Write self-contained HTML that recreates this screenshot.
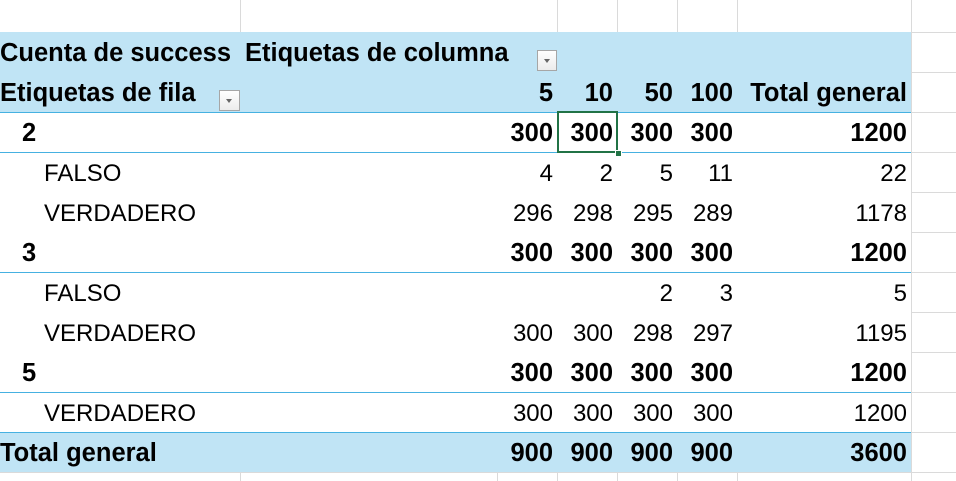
<!DOCTYPE html>
<html><head><meta charset="utf-8"><style>
body{margin:0;width:956px;height:481px;background:#fff;position:relative;overflow:hidden;font-family:"Liberation Sans",sans-serif;font-size:24px;color:#000}
.a{position:absolute}
.vl{position:absolute;width:1px;background:#dadada}
.hl{position:absolute;height:1px;background:#dadada}
.bl{position:absolute;left:0;width:911px;height:1px;background:#46b1e1}
.t{position:absolute;height:40px;line-height:43px;white-space:nowrap}
.r{text-align:right}
.b{font-weight:bold;font-size:25.5px}
.dd{position:absolute;width:18px;height:18px;border:1px solid #a6a6a6;background:linear-gradient(#fff,#ececec);box-sizing:border-box}
.dd:after{content:"";position:absolute;left:6px;top:8px;border-left:3.5px solid transparent;border-right:3.5px solid transparent;border-top:4px solid #666}
</style></head><body>
<div class="vl" style="left:240px;top:0;height:32px"></div>
<div class="vl" style="left:557px;top:0;height:32px"></div>
<div class="vl" style="left:617px;top:0;height:32px"></div>
<div class="vl" style="left:677px;top:0;height:32px"></div>
<div class="vl" style="left:737px;top:0;height:32px"></div>
<div class="vl" style="left:911px;top:0;height:481px"></div>
<div class="vl" style="left:557px;top:473px;height:8px"></div>
<div class="vl" style="left:617px;top:473px;height:8px"></div>
<div class="vl" style="left:677px;top:473px;height:8px"></div>
<div class="vl" style="left:737px;top:473px;height:8px"></div>
<div class="vl" style="left:497px;top:473px;height:8px"></div>
<div class="vl" style="left:240px;top:473px;height:8px"></div>
<div class="hl" style="left:911px;top:32px;width:45px"></div>
<div class="hl" style="left:911px;top:72px;width:45px"></div>
<div class="hl" style="left:911px;top:112px;width:45px"></div>
<div class="hl" style="left:911px;top:152px;width:45px"></div>
<div class="hl" style="left:911px;top:192px;width:45px"></div>
<div class="hl" style="left:911px;top:232px;width:45px"></div>
<div class="hl" style="left:911px;top:272px;width:45px"></div>
<div class="hl" style="left:911px;top:312px;width:45px"></div>
<div class="hl" style="left:911px;top:352px;width:45px"></div>
<div class="hl" style="left:911px;top:392px;width:45px"></div>
<div class="hl" style="left:911px;top:432px;width:45px"></div>
<div class="hl" style="left:0;top:472px;width:956px"></div>
<div class="a" style="left:0;top:32px;width:911px;height:80px;background:#c0e4f5"></div>
<div class="a" style="left:0;top:432px;width:911px;height:40px;background:#c0e4f5"></div>
<div class="bl" style="top:112px"></div>
<div class="bl" style="top:152px"></div>
<div class="bl" style="top:272px"></div>
<div class="bl" style="top:392px"></div>
<div class="bl" style="top:432px"></div>
<div class="t b" style="left:0;top:32px">Cuenta de success</div>
<div class="t b" style="left:245px;top:32px">Etiquetas de columna</div>
<div class="dd" style="left:537px;top:50px;width:20px;height:21px"></div>
<div class="t b" style="left:0;top:72px">Etiquetas de fila</div>
<div class="dd" style="left:219px;top:90px;width:21px;height:21px"></div>
<div class="t b r" style="left:497px;top:72px;width:56px">5</div>
<div class="t b r" style="left:557px;top:72px;width:56px">10</div>
<div class="t b r" style="left:617px;top:72px;width:56px">50</div>
<div class="t b r" style="left:677px;top:72px;width:56px">100</div>
<div class="t b r" style="left:737px;top:72px;width:170px">Total general</div>
<div class="t b" style="left:22px;top:112px">2</div>
<div class="t b r" style="left:497px;top:112px;width:56px">300</div>
<div class="t b r" style="left:557px;top:112px;width:56px">300</div>
<div class="t b r" style="left:617px;top:112px;width:56px">300</div>
<div class="t b r" style="left:677px;top:112px;width:56px">300</div>
<div class="t b r" style="left:737px;top:112px;width:170px">1200</div>
<div class="t" style="left:44px;top:152px">FALSO</div>
<div class="t r" style="left:497px;top:152px;width:56px">4</div>
<div class="t r" style="left:557px;top:152px;width:56px">2</div>
<div class="t r" style="left:617px;top:152px;width:56px">5</div>
<div class="t r" style="left:677px;top:152px;width:56px">11</div>
<div class="t r" style="left:737px;top:152px;width:170px">22</div>
<div class="t" style="left:44px;top:192px">VERDADERO</div>
<div class="t r" style="left:497px;top:192px;width:56px">296</div>
<div class="t r" style="left:557px;top:192px;width:56px">298</div>
<div class="t r" style="left:617px;top:192px;width:56px">295</div>
<div class="t r" style="left:677px;top:192px;width:56px">289</div>
<div class="t r" style="left:737px;top:192px;width:170px">1178</div>
<div class="t b" style="left:22px;top:232px">3</div>
<div class="t b r" style="left:497px;top:232px;width:56px">300</div>
<div class="t b r" style="left:557px;top:232px;width:56px">300</div>
<div class="t b r" style="left:617px;top:232px;width:56px">300</div>
<div class="t b r" style="left:677px;top:232px;width:56px">300</div>
<div class="t b r" style="left:737px;top:232px;width:170px">1200</div>
<div class="t" style="left:44px;top:272px">FALSO</div>
<div class="t r" style="left:617px;top:272px;width:56px">2</div>
<div class="t r" style="left:677px;top:272px;width:56px">3</div>
<div class="t r" style="left:737px;top:272px;width:170px">5</div>
<div class="t" style="left:44px;top:312px">VERDADERO</div>
<div class="t r" style="left:497px;top:312px;width:56px">300</div>
<div class="t r" style="left:557px;top:312px;width:56px">300</div>
<div class="t r" style="left:617px;top:312px;width:56px">298</div>
<div class="t r" style="left:677px;top:312px;width:56px">297</div>
<div class="t r" style="left:737px;top:312px;width:170px">1195</div>
<div class="t b" style="left:22px;top:352px">5</div>
<div class="t b r" style="left:497px;top:352px;width:56px">300</div>
<div class="t b r" style="left:557px;top:352px;width:56px">300</div>
<div class="t b r" style="left:617px;top:352px;width:56px">300</div>
<div class="t b r" style="left:677px;top:352px;width:56px">300</div>
<div class="t b r" style="left:737px;top:352px;width:170px">1200</div>
<div class="t" style="left:44px;top:392px">VERDADERO</div>
<div class="t r" style="left:497px;top:392px;width:56px">300</div>
<div class="t r" style="left:557px;top:392px;width:56px">300</div>
<div class="t r" style="left:617px;top:392px;width:56px">300</div>
<div class="t r" style="left:677px;top:392px;width:56px">300</div>
<div class="t r" style="left:737px;top:392px;width:170px">1200</div>
<div class="t b" style="left:0;top:432px">Total general</div>
<div class="t b r" style="left:497px;top:432px;width:56px">900</div>
<div class="t b r" style="left:557px;top:432px;width:56px">900</div>
<div class="t b r" style="left:617px;top:432px;width:56px">900</div>
<div class="t b r" style="left:677px;top:432px;width:56px">900</div>
<div class="t b r" style="left:737px;top:432px;width:170px">3600</div>
<div class="a" style="left:557px;top:111px;width:61px;height:42px;border:2px solid #217346;box-sizing:border-box"></div>
<div class="a" style="left:615px;top:150px;width:5px;height:5px;background:#217346;border:1px solid #fff"></div>
</body></html>
